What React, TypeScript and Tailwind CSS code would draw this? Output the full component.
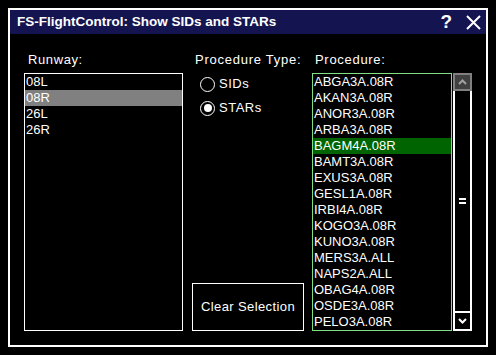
const runways = ['08L', '08R', '26L', '26R'];

const procedures = [
  'ABGA3A.08R',
  'AKAN3A.08R',
  'ANOR3A.08R',
  'ARBA3A.08R',
  'BAGM4A.08R',
  'BAMT3A.08R',
  'EXUS3A.08R',
  'GESL1A.08R',
  'IRBI4A.08R',
  'KOGO3A.08R',
  'KUNO3A.08R',
  'MERS3A.ALL',
  'NAPS2A.ALL',
  'OBAG4A.08R',
  'OSDE3A.08R',
  'PELO3A.08R',
];

function Radio({ label, checked }: { label: string; checked?: boolean }) {
  return (
    <div className="flex items-center h-[24px] pl-[8px] gap-[4px]">
      <div className="w-[15px] h-[15px] rounded-full border-[1.5px] border-white flex items-center justify-center">
        {checked && <div className="w-[8px] h-[8px] rounded-full bg-white" />}
      </div>
      <span className="tracking-[0.5px]">{label}</span>
    </div>
  );
}

export default function App() {
  return (
    <div
      className="w-[496px] h-[355px] bg-black p-[8px] text-white text-[13px] leading-[16px]"
      style={{ fontFamily: '"Liberation Sans", Arial, sans-serif' }}
    >
      <div className="w-[480px] h-[339px] border-2 border-white flex flex-col">
        {/* Title bar */}
        <div className="h-[24px] bg-[#141450] flex items-center pl-[7px] pr-[5px]">
          <span className="font-bold text-[13.5px] flex-1">FS-FlightControl: Show SIDs and STARs</span>
          <span className="font-bold text-[19px] leading-[20px] mr-[14px]">?</span>
          <svg width="15" height="15" viewBox="0 0 15 15">
            <path d="M1 1 L14 14 M14 1 L1 14" stroke="white" strokeWidth="2" />
          </svg>
        </div>

        {/* Body */}
        <div className="flex pl-[14px] pt-[18px]">
          {/* Runway */}
          <div className="w-[159px] flex flex-col">
            <div className="h-[16px] mb-[5px] pl-[4px] tracking-[0.6px]">Runway:</div>
            <div className="h-[258px] border border-white">
              {runways.map((r) => (
                <div key={r} className={`h-[16px] pl-[1px] flex items-center ${r === '08R' ? 'bg-[#808080]' : ''}`}>
                  {r}
                </div>
              ))}
            </div>
          </div>

          {/* Procedure type */}
          <div className="w-[112px] ml-[9px] flex flex-col">
            <div className="h-[16px] mb-[5px] pl-[3px] tracking-[0.75px] whitespace-nowrap">Procedure Type:</div>
            <div className="h-[258px] flex flex-col -mt-[1px]">
              <Radio label="SIDs" />
              <Radio label="STARs" checked />
              <button className="mt-auto h-[48px] w-[112px] border border-white flex items-center justify-center mb-[-1px] tracking-[0.4px]">
                Clear Selection
              </button>
            </div>
          </div>

          {/* Procedure */}
          <div className="w-[160px] ml-[8px] flex flex-col">
            <div className="h-[16px] mb-[5px] pl-[3px] tracking-[0.7px]">Procedure:</div>
            <div className="h-[258px] flex gap-[1px]">
              <div className="w-[140px] border border-[#80e080] overflow-hidden">
                {procedures.map((p) => (
                  <div
                    key={p}
                    className={`h-[16px] pl-[1px] flex items-center ${p === 'BAGM4A.08R' ? 'bg-[#006400]' : ''}`}
                  >
                    {p}
                  </div>
                ))}
              </div>
              <div className="w-[19px] flex flex-col">
                <div className="h-[18px] bg-[#404040] border-2 border-[#808080] flex items-center justify-center">
                  <svg width="9" height="6" viewBox="0 0 9 6">
                    <path d="M1 5 L4.5 1.5 L8 5" stroke="#a0a0a0" strokeWidth="2" fill="none" />
                  </svg>
                </div>
                <div className="flex-1 border-x-2 border-white flex flex-col items-center pt-[107px] gap-[2px]">
                  <div className="w-[7px] h-[2px] bg-white" />
                  <div className="w-[7px] h-[2px] bg-white" />
                </div>
                <div className="h-[20px] border-2 border-white flex items-center justify-center">
                  <svg width="9" height="6" viewBox="0 0 9 6">
                    <path d="M1 1 L4.5 4.5 L8 1" stroke="white" strokeWidth="2" fill="none" />
                  </svg>
                </div>
              </div>
            </div>
          </div>
        </div>
      </div>
    </div>
  );
}
